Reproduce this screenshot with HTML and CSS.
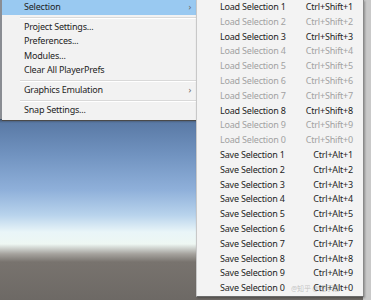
FILE: index.html
```html
<!DOCTYPE html>
<html lang="en">
<head>
    <meta charset="UTF-8">
    <title>Edit Menu</title>
    <link rel="stylesheet" href="styles.css">
</head>
<body>
    <div class="scene"></div>

    <!-- Edit menu (lower part) -->
    <div class="menu">
        <div class="item active">Selection <span class="arrow">›</span></div>
        <div class="sep"></div>
        <div class="item">Project Settings...</div>
        <div class="item">Preferences...</div>
        <div class="item">Modules...</div>
        <div class="item">Clear All PlayerPrefs</div>
        <div class="sep"></div>
        <div class="item">Graphics Emulation <span class="arrow">›</span></div>
        <div class="sep"></div>
        <div class="item">Snap Settings...</div>
    </div>

    <!-- Selection submenu -->
    <div class="submenu">
        <div class="row"><span>Load Selection 1</span><span>Ctrl+Shift+1</span></div>
        <div class="row off"><span>Load Selection 2</span><span>Ctrl+Shift+2</span></div>
        <div class="row"><span>Load Selection 3</span><span>Ctrl+Shift+3</span></div>
        <div class="row off"><span>Load Selection 4</span><span>Ctrl+Shift+4</span></div>
        <div class="row off"><span>Load Selection 5</span><span>Ctrl+Shift+5</span></div>
        <div class="row off"><span>Load Selection 6</span><span>Ctrl+Shift+6</span></div>
        <div class="row off"><span>Load Selection 7</span><span>Ctrl+Shift+7</span></div>
        <div class="row"><span>Load Selection 8</span><span>Ctrl+Shift+8</span></div>
        <div class="row off"><span>Load Selection 9</span><span>Ctrl+Shift+9</span></div>
        <div class="row off"><span>Load Selection 0</span><span>Ctrl+Shift+0</span></div>
        <div class="row"><span>Save Selection 1</span><span>Ctrl+Alt+1</span></div>
        <div class="row"><span>Save Selection 2</span><span>Ctrl+Alt+2</span></div>
        <div class="row"><span>Save Selection 3</span><span>Ctrl+Alt+3</span></div>
        <div class="row"><span>Save Selection 4</span><span>Ctrl+Alt+4</span></div>
        <div class="row"><span>Save Selection 5</span><span>Ctrl+Alt+5</span></div>
        <div class="row"><span>Save Selection 6</span><span>Ctrl+Alt+6</span></div>
        <div class="row"><span>Save Selection 7</span><span>Ctrl+Alt+7</span></div>
        <div class="row"><span>Save Selection 8</span><span>Ctrl+Alt+8</span></div>
        <div class="row"><span>Save Selection 9</span><span>Ctrl+Alt+9</span></div>
        <div class="row"><span>Save Selection 0</span><span>Ctrl+Alt+0</span></div>
        <span class="watermark">@知乎 @程序猿</span>
    </div>
</body>
</html>
```

FILE: styles.css
```css
* {
    margin: 0;
    padding: 0;
    box-sizing: border-box;
}
body {
    width: 371px;
    height: 300px;
    position: relative;
    overflow: hidden;
    font-family: 'Noto Sans', 'Noto Sans CJK SC', sans-serif;
    font-size: 9px;
    letter-spacing: -0.2px;
    color: #1e1e1e;
    background: #8c8c8c;
}

/* Scene view behind the menus */
.scene {
    height: 300px;
    background:
        linear-gradient(to right, transparent 363px, #c9c9c9 363px),
        linear-gradient(to bottom,
            #8a8d93 0,
            #8a8d93 119px,
            #3e4a5c 119px,
            #5a7aa6 123px,
            #7193c0 155px,
            #8fb0da 190px,
            #b8d3ec 215px,
            #e9f5f8 232px,
            #eef7f3 244px,
            #a5a29d 254px,
            #78736e 262px,
            #6d6965 300px);
}

/* Main menu */
.menu {
    position: absolute;
    top: 0;
    left: 2px;
    width: 194px;
    height: 121px;
    background: #f2f2f2;
    border-bottom: 1px solid #4a4a4a;
    padding-bottom: 3px;
}
.item {
    height: 14.6px;
    line-height: 14.6px;
    padding-left: 22px;
    position: relative;
    white-space: nowrap;
}
.item.active {
    background: #99c9f1;
}
.arrow {
    position: absolute;
    right: 5px;
    top: 0;
    color: #666;
}
.sep {
    height: 5px;
    margin-left: 18px;
    position: relative;
}
.sep::after {
    content: '';
    position: absolute;
    left: 0;
    right: 0;
    top: 2px;
    border-top: 1px solid #d9d9d9;
    border-bottom: 1px solid #fff;
}

/* Submenu */
.submenu {
    position: absolute;
    top: 0;
    left: 196px;
    width: 168px;
    height: 297px;
    background: #f3f3f3;
    border-left: 1px solid #c8c8c8;
    border-right: 1px solid #8a8a8a;
    border-bottom: 1px solid #6a6a6a;
    box-shadow: 1px 1px 2px rgba(0, 0, 0, 0.3);
}
.row {
    display: flex;
    justify-content: space-between;
    height: 14.8px;
    line-height: 14.8px;
    padding: 0 10px 0 23px;
    white-space: nowrap;
}
.row.off {
    color: #a2a2a2;
}
.watermark {
    position: absolute;
    left: 94px;
    bottom: 2px;
    font-size: 7px;
    line-height: 10px;
    color: rgba(120, 120, 120, 0.4);
}
```
